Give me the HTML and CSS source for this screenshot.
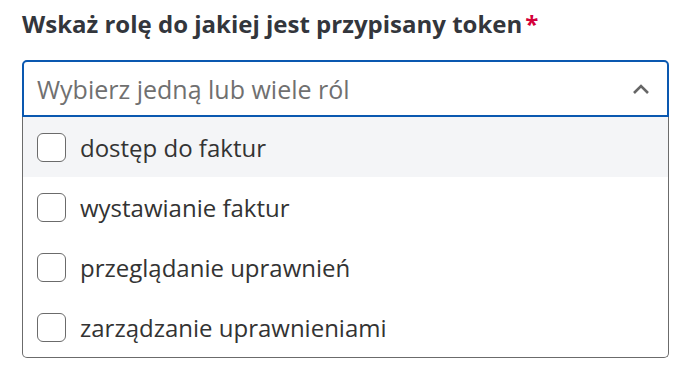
FILE: index.html
```html
<!DOCTYPE html>
<html lang="pl">
<head>
<meta charset="utf-8">
<link rel="stylesheet" href="styles.css">
</head>
<body>
<div class="field">
  <div class="label">Wskaż rolę do jakiej jest przypisany token<span class="req">*</span></div>
  <div class="select">
    <span class="placeholder">Wybierz jedną lub wiele ról</span>
    <svg class="chevron" width="18" height="12" viewBox="0 0 18 12"><path d="M2 10 L9 3 L16 10" fill="none" stroke="#666" stroke-width="2.6"/></svg>
  </div>
  <ul class="list">
    <li class="option active"><span class="box"></span>dostęp do faktur</li>
    <li class="option"><span class="box"></span>wystawianie faktur</li>
    <li class="option"><span class="box"></span>przeglądanie uprawnień</li>
    <li class="option"><span class="box"></span>zarządzanie uprawnieniami</li>
  </ul>
</div>
</body>
</html>
```
FILE: styles.css
```css
html, body { margin: 0; padding: 0; background: #fff; }
body { font-family: "Open Sans", "Noto Sans", sans-serif; }
.field { width: 647px; margin: 6px 0 0 22px; }
.label { font-weight: 700; font-size: 24px; line-height: 36px; color: #33363c; }
.req { color: #d4003a; margin-left: 3px; }
.select {
  margin-top: 18px;
  height: 53px;
  border: 2px solid #0a58b0;
  border-radius: 5px 5px 0 0;
  display: flex; align-items: center; justify-content: space-between;
  padding: 0 17px 0 13px;
}
.placeholder { font-size: 25px; color: #707070; }
.chevron { display: block; }
.list {
  list-style: none; margin: 0; padding: 0;
  border: 1px solid #6b6b6b; border-top: none;
  border-radius: 0 0 5px 5px;
}
.option {
  height: 60px; display: flex; align-items: center;
  padding-left: 14px; font-size: 24px; color: #333;
}
.option.active { background: #f4f5f7; }
.box {
  width: 27px; height: 27px; border: 1px solid #6b6b6b; border-radius: 6px;
  background: #fff; margin-right: 14px; flex: none;
}
```
